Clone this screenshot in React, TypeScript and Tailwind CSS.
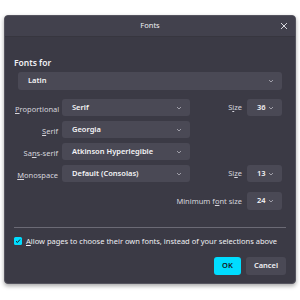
import React from "react";

function Chevron() {
  return (
    <svg width="6" height="4" viewBox="0 0 6 4" className="shrink-0">
      <path d="M1 1 L3 3 L5 1" fill="none" stroke="#a9a8b2" strokeWidth="0.9" />
    </svg>
  );
}

function Select({ value, className = "" }: { value: string; className?: string }) {
  return (
    <div
      className={`flex shrink-0 items-center justify-between rounded-[3px] bg-[#4a4955] pl-[10px] pr-[8px] text-[7.5px] font-semibold leading-none text-[#f4f4f6] ${className}`}
    >
      <span>{value}</span>
      <Chevron />
    </div>
  );
}

function Label({ pre, hot, post }: { pre: string; hot: string; post: string }) {
  return (
    <span className="text-[7.5px] leading-[17px] text-[#d6d5dd]">
      {pre}
      <span className="underline underline-offset-1">{hot}</span>
      {post}
    </span>
  );
}

export default function App() {
  return (
    <div
      className="h-[300px] w-[300px] bg-white px-[4px] pt-[15px]"
      style={{ fontFamily: '"Noto Sans", "Open Sans", sans-serif' }}
    >
      <div className="flex h-[269px] w-[292px] flex-col overflow-hidden rounded-[4px] border border-[#55545f] bg-[#3b3a45] shadow-[0_2px_4px_rgba(0,0,0,0.35)]">
        {/* title bar */}
        <div className="relative flex h-[21px] shrink-0 items-center justify-center border-b border-[#37363f] bg-[#42414d]">
          <span className="text-[7.5px] leading-none text-[#f0f0f4]">Fonts</span>
          <svg width="8" height="8" viewBox="0 0 8 8" className="absolute right-[7px] top-[6px]">
            <path d="M1 1 L7 7 M7 1 L1 7" stroke="#d8d8de" strokeWidth="1" />
          </svg>
        </div>

        <div className="flex flex-col px-[10px]">
          <div className="-ml-px mt-[20px] text-[8.5px] font-semibold leading-[12px] text-[#f0f0f4]">
            Fonts for
          </div>
          <Select value="Latin" className="ml-[3px] mt-[3px] h-[18px] w-[264px]" />

          <div className="mt-[9px] flex flex-col gap-[5px] pr-[3px]">
            <div className="flex h-[17px] items-center">
              <div className="w-[43px] text-right leading-[17px]">
                <Label pre="" hot="P" post="roportional" />
              </div>
              <Select value="Serif" className="ml-[4px] h-[17px] w-[128px]" />
              <div className="flex-1" />
              <Label pre="S" hot="i" post="ze" />
              <Select value="36" className="ml-[5px] h-[17px] w-[35px]" />
            </div>
            <div className="flex h-[17px] items-center">
              <div className="w-[43px] text-right leading-[17px]">
                <Label pre="" hot="S" post="erif" />
              </div>
              <Select value="Georgia" className="ml-[4px] h-[17px] w-[128px]" />
            </div>
            <div className="flex h-[17px] items-center">
              <div className="w-[43px] text-right leading-[17px]">
                <Label pre="Sa" hot="n" post="s-serif" />
              </div>
              <Select value="Atkinson Hyperlegible" className="ml-[4px] h-[17px] w-[128px]" />
            </div>
            <div className="flex h-[17px] items-center">
              <div className="w-[43px] text-right leading-[17px]">
                <Label pre="" hot="M" post="onospace" />
              </div>
              <Select value="Default (Consolas)" className="ml-[4px] h-[17px] w-[128px]" />
              <div className="flex-1" />
              <Label pre="Si" hot="z" post="e" />
              <Select value="13" className="ml-[5px] h-[17px] w-[35px]" />
            </div>
          </div>

          <div className="mt-[10px] flex h-[18px] items-center justify-end pr-[3px]">
            <Label pre="Minimum f" hot="o" post="nt size" />
            <Select value="24" className="ml-[5px] h-[18px] w-[35px]" />
          </div>

          <div className="-ml-px mt-[17px] h-px w-[272px] bg-[#6b6a75]" />

          <div className="-ml-px mt-[7px] flex h-[12px] items-center">
            <div className="flex h-[8px] w-[8px] items-center justify-center rounded-[1.5px] bg-[#00ddff]">
              <svg width="6" height="6" viewBox="0 0 6 6">
                <path d="M1 3.2 L2.4 4.5 L5 1.5" fill="none" stroke="#1c1b22" strokeWidth="1" />
              </svg>
            </div>
            <span className="ml-[4px] text-[7.5px] leading-[12px] text-[#f0f0f4]">
              <span className="underline underline-offset-1">A</span>
              llow pages to choose their own fonts, instead of your selections above
            </span>
          </div>

          <div className="-mr-px mt-[10px] flex justify-end gap-[5px]">
            <button className="flex h-[18px] w-[27px] items-center justify-center rounded-[3px] bg-[#00ddff] text-[7.5px] font-semibold leading-none text-[#15141a]">
              OK
            </button>
            <button className="flex h-[18px] w-[40px] items-center justify-center rounded-[3px] bg-[#4a4955] text-[7.5px] font-semibold leading-none text-[#f0f0f4]">
              Cancel
            </button>
          </div>
        </div>
      </div>
    </div>
  );
}
